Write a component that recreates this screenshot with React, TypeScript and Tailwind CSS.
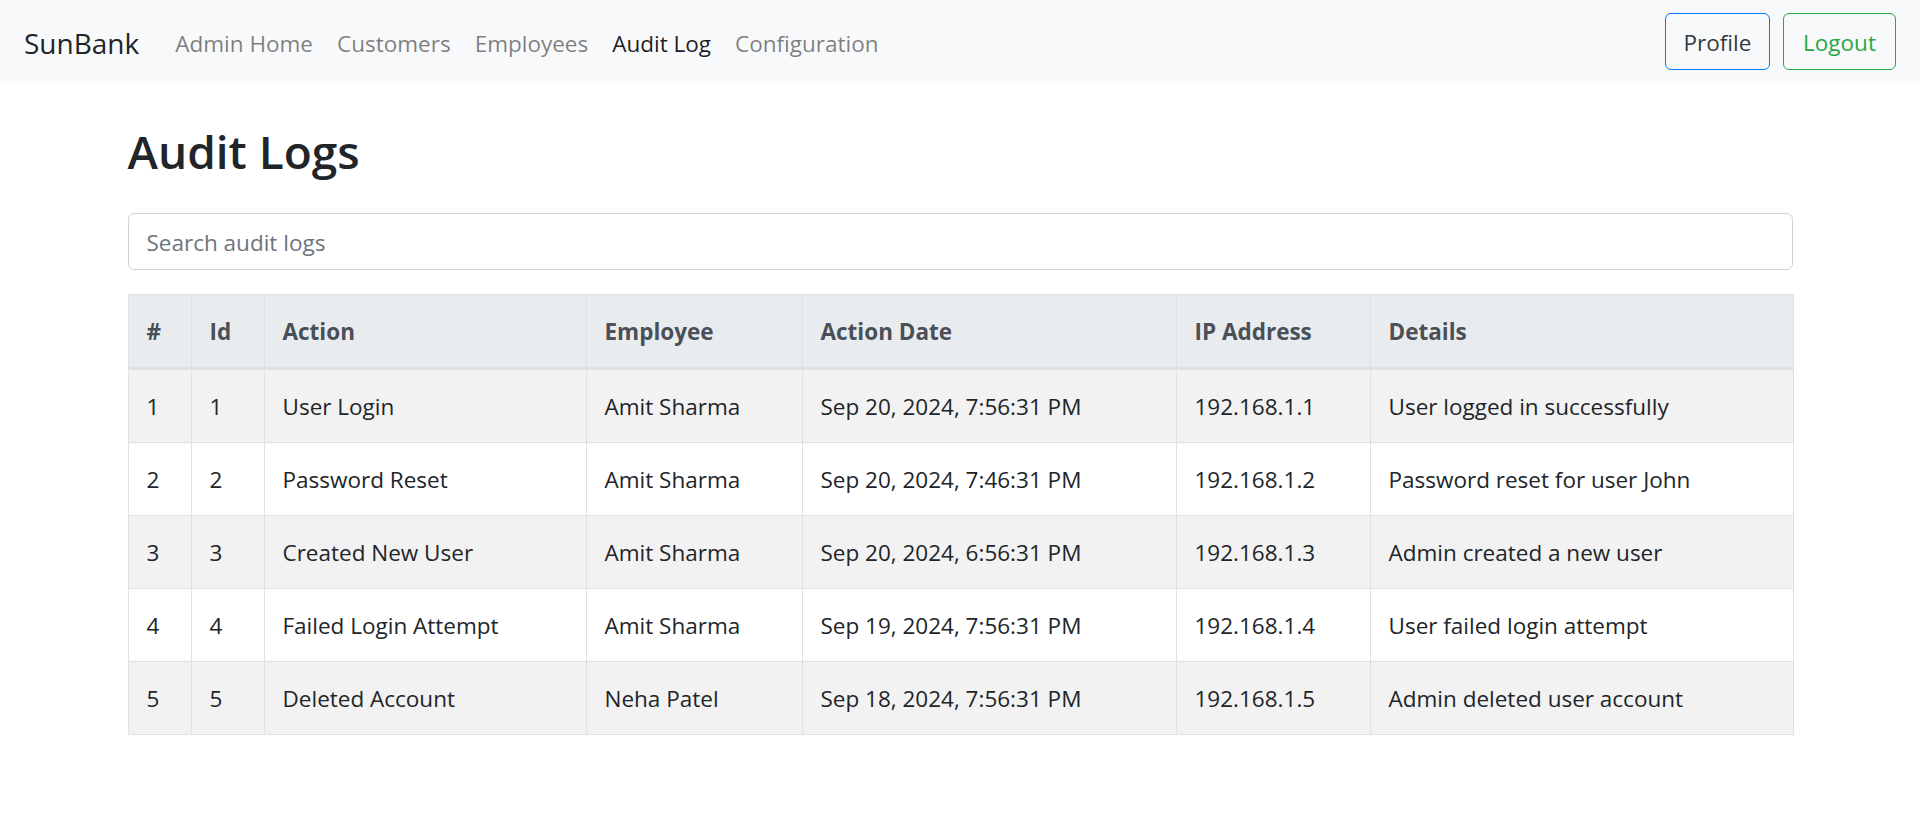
const navLinks = [
  { label: "Admin Home", active: false },
  { label: "Customers", active: false },
  { label: "Employees", active: false },
  { label: "Audit Log", active: true },
  { label: "Configuration", active: false },
];

const columns = [
  { label: "#", width: "w-[63px]" },
  { label: "Id", width: "w-[73px]" },
  { label: "Action", width: "w-[322px]" },
  { label: "Employee", width: "w-[216px]" },
  { label: "Action Date", width: "w-[374px]" },
  { label: "IP Address", width: "w-[194px]" },
  { label: "Details", width: "w-[423px]" },
];

const logs = [
  { id: 1, action: "User Login", employee: "Amit Sharma", date: "Sep 20, 2024, 7:56:31 PM", ip: "192.168.1.1", details: "User logged in successfully" },
  { id: 2, action: "Password Reset", employee: "Amit Sharma", date: "Sep 20, 2024, 7:46:31 PM", ip: "192.168.1.2", details: "Password reset for user John" },
  { id: 3, action: "Created New User", employee: "Amit Sharma", date: "Sep 20, 2024, 6:56:31 PM", ip: "192.168.1.3", details: "Admin created a new user" },
  { id: 4, action: "Failed Login Attempt", employee: "Amit Sharma", date: "Sep 19, 2024, 7:56:31 PM", ip: "192.168.1.4", details: "User failed login attempt" },
  { id: 5, action: "Deleted Account", employee: "Neha Patel", date: "Sep 18, 2024, 7:56:31 PM", ip: "192.168.1.5", details: "Admin deleted user account" },
];

const cell = "border border-[#dee2e6] px-[18px] pt-[19px] pb-[17px]";

function Navbar() {
  return (
    <nav className="flex h-[83px] items-center bg-[#f8f9fa] px-[24px]">
      <a className="mr-[24px] pt-[4px] text-[28px] leading-[45px] text-[#212529]" href="#">
        SunBank
      </a>
      <ul className="flex">
        {navLinks.map((link) => (
          <li key={link.label}>
            <a
              href="#"
              className={`block px-[12px] pt-[14px] pb-[10px] text-[22.5px] leading-[36px] ${
                link.active ? "text-black/90" : "text-black/50"
              }`}
            >
              {link.label}
            </a>
          </li>
        ))}
      </ul>
      <div className="ml-auto flex gap-[13px]">
        <button className="h-[57px] w-[105px] rounded-[6px] border border-[#007bff] pt-[2px] text-[22.5px] text-[#343a40]">
          Profile
        </button>
        <button className="h-[57px] w-[113px] rounded-[6px] border border-[#28a745] pt-[2px] text-[22.5px] text-[#28a745]">
          Logout
        </button>
      </div>
    </nav>
  );
}

export default function App() {
  return (
    <div className="min-h-screen bg-white font-['Open_Sans',sans-serif] text-[#212529]">
      <Navbar />
      <main className="mx-auto mt-[40px] w-[1665px]">
        <h2 className="mb-[32px] text-[46px] leading-[57.6px] font-semibold">Audit Logs</h2>
        <input
          type="text"
          placeholder="Search audit logs"
          className="mb-[24px] block h-[57px] w-full rounded-[6px] border border-[#ced4da] px-[18px] pt-[2px] text-[22.5px] text-[#495057] outline-none placeholder:text-[#6c757d]"
        />
        <table className="w-full table-fixed border-collapse text-[22.5px] leading-[36px]">
          <thead>
            <tr className="bg-[#e9ecef] text-[#495057]">
              {columns.map((col) => (
                <th
                  key={col.label}
                  className={`${col.width} border border-b-[3px] border-[#dee2e6] px-[18px] pt-[19px] pb-[17px] text-left font-bold`}
                >
                  {col.label}
                </th>
              ))}
            </tr>
          </thead>
          <tbody>
            {logs.map((log, i) => (
              <tr key={log.id} className={i % 2 === 0 ? "bg-[#f2f2f2]" : "bg-white"}>
                <td className={cell}>{i + 1}</td>
                <td className={cell}>{log.id}</td>
                <td className={cell}>{log.action}</td>
                <td className={cell}>{log.employee}</td>
                <td className={cell}>{log.date}</td>
                <td className={cell}>{log.ip}</td>
                <td className={cell}>{log.details}</td>
              </tr>
            ))}
          </tbody>
        </table>
      </main>
    </div>
  );
}
